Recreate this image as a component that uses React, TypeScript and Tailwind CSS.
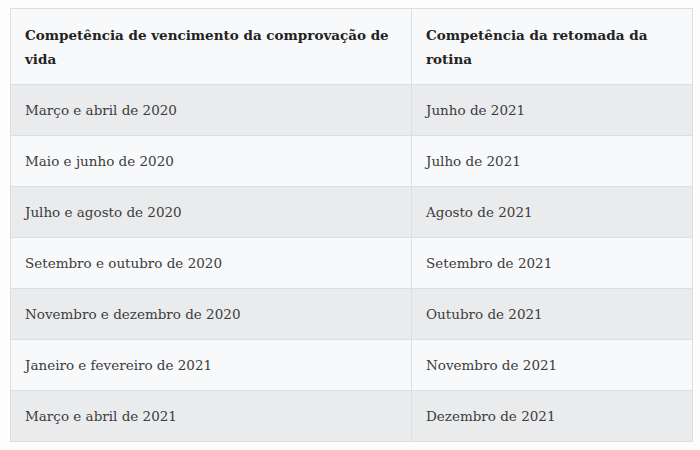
const rows: [string, string][] = [
  ['Março e abril de 2020', 'Junho de 2021'],
  ['Maio e junho de 2020', 'Julho de 2021'],
  ['Julho e agosto de 2020', 'Agosto de 2021'],
  ['Setembro e outubro de 2020', 'Setembro de 2021'],
  ['Novembro e dezembro de 2020', 'Outubro de 2021'],
  ['Janeiro e fevereiro de 2021', 'Novembro de 2021'],
  ['Março e abril de 2021', 'Dezembro de 2021'],
];

export default function App() {
  return (
    <div className="w-[700px] h-[450px] bg-[#fdfdfd] pt-2 pl-[10px] font-['DejaVu_Serif',serif]">
      <table className="w-[682px] border-collapse table-fixed">
        <colgroup>
          <col className="w-[401px]" />
          <col className="w-[281px]" />
        </colgroup>
        <thead>
          <tr className="bg-[#f8f9fa] h-[76px]">
            <th className="border border-[#dcdee1] px-[14px] text-left align-middle text-[13.5px] leading-[24px] font-bold text-[#222]">
              Competência de vencimento da comprovação de vida
            </th>
            <th className="border border-[#dcdee1] px-[14px] text-left align-middle text-[13.5px] leading-[24px] font-bold text-[#222]">
              Competência da retomada da rotina
            </th>
          </tr>
        </thead>
        <tbody>
          {rows.map(([a, b], i) => (
            <tr key={a} className={i % 2 === 0 ? 'bg-[#eaebec] h-[51px]' : 'bg-[#f8f9fa] h-[51px]'}>
              <td className="border border-[#dcdee1] px-[14px] align-middle text-[13.5px] text-[#3c3c3c]">{a}</td>
              <td className="border border-[#dcdee1] px-[14px] align-middle text-[13.5px] text-[#3c3c3c]">{b}</td>
            </tr>
          ))}
        </tbody>
      </table>
    </div>
  );
}
